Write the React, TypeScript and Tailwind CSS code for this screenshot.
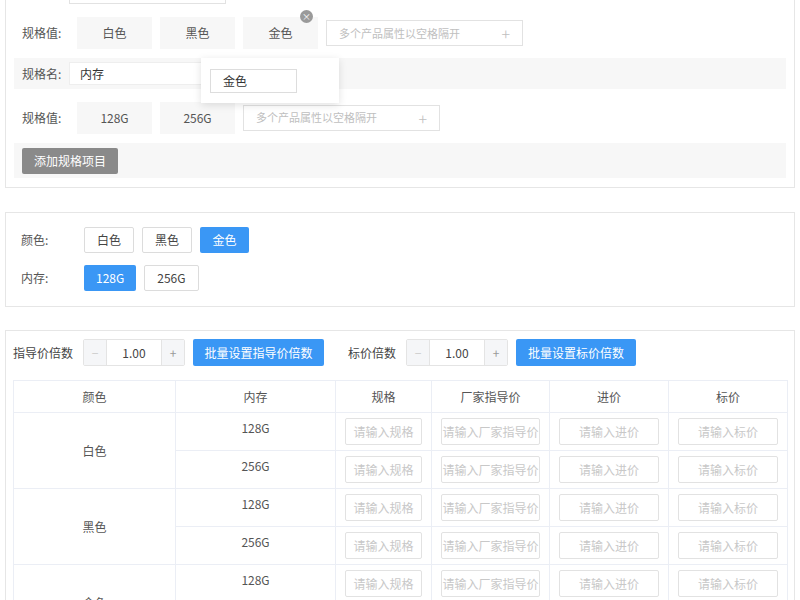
import React from "react";

const F = { fontFamily: '"Noto Sans CJK SC", "Liberation Sans", sans-serif' };

function Chip({ t, w = "w-[75px]" }: { t: string; w?: string }) {
  return <div className={`${w} h-[32px] bg-[#f7f7f7] flex items-center justify-center text-[12px] text-[#555]`}>{t}</div>;
}
function AddInput({ w }: { w: string }) {
  return (
    <div className={`${w} h-[26px] border border-[#e2e2e2] bg-white flex items-center justify-between px-3 text-[11px] text-[#c0c0c0] whitespace-nowrap overflow-hidden`}>
      <span>多个产品属性以空格隔开</span><span className="text-[16px] font-light">+</span>
    </div>
  );
}
function Opt({ t, on }: { t: string; on?: boolean }) {
  return (
    <div className={`h-[26px] px-3 min-w-[49px] flex items-center justify-center text-[12px] rounded-[2px] ${on ? "bg-[#3a97f5] text-white" : "border border-[#dcdcdc] text-[#444] bg-white"}`}>{t}</div>
  );
}
function Stepper() {
  return (
    <div className="flex h-[27px] border border-[#e4e4e4] rounded-[2px] w-[102px] text-[12px]">
      <div className="w-[23px] bg-[#f5f6f8] flex items-center justify-center text-[#ccc] border-r border-[#e4e4e4]">−</div>
      <div className="flex-1 flex items-center justify-center text-[#444]">1.00</div>
      <div className="w-[23px] bg-[#f5f6f8] flex items-center justify-center text-[#999] border-l border-[#e4e4e4]">+</div>
    </div>
  );
}
function Cell({ t }: { t: string }) {
  return (
    <td className="border border-[#ebeef5] px-[9px] py-[5px]">
      <div className="h-[27px] border border-[#e2e2e2] rounded-[2px] flex items-center justify-center text-[12px] text-[#c8c8c8] overflow-hidden whitespace-nowrap">{t}</div>
    </td>
  );
}

export default function App() {
  const colors = ["白色", "黑色", "金色"];
  return (
    <div style={F} className="w-[800px] h-[600px] overflow-hidden bg-white relative">
      <div className="mx-[5px] mt-[-8px] border border-[#e6e6e6] px-[8px] pb-[9px] relative">
        <div className="h-[11px] flex items-end pl-[55px]"><div className="w-[157px] h-[14px] border border-[#e2e2e2] bg-white" /></div>
        <div className="flex items-center gap-[8px] pl-[8px] h-[32px] mt-[13px]">
          <span className="w-[47px] text-[12px] text-[#555]">规格值:</span>
          <Chip t="白色" /><Chip t="黑色" /><Chip t="金色" />
          <AddInput w="w-[197px]" />
        </div>
        <div className="flex items-center bg-[#f7f7f7] h-[31px] mt-[9px] pl-[8px]">
          <span className="w-[47px] text-[12px] text-[#555]">规格名:</span>
          <div className="w-[135px] h-[23px] bg-white border border-[#eee] flex items-center pl-[10px] text-[12px] text-[#333]">内存</div>
        </div>
        <div className="flex items-center gap-[8px] pl-[8px] h-[33px] mt-[12px]">
          <span className="w-[47px] text-[12px] text-[#555]">规格值:</span>
          <Chip t="128G" /><Chip t="256G" />
          <AddInput w="w-[197px]" />
        </div>
        <div className="flex items-center bg-[#f7f7f7] h-[35px] mt-[9px] pl-[8px]">
          <div className="h-[26px] px-[12px] bg-[#8a8a8a] rounded-[2px] text-white text-[12px] flex items-center">添加规格项目</div>
        </div>
        <div className="absolute left-[195px] top-[65px] w-[138px] h-[45px] bg-white shadow-[0_2px_8px_rgba(0,0,0,0.12)] flex items-center pl-[9px]">
          <div className="w-[87px] h-[24px] border border-[#ddd] text-[12px] text-[#333] flex items-center pl-[12px]">金色</div>
        </div>
        <div className="absolute left-[294px] top-[17px] w-[13px] h-[13px] rounded-full bg-[#9a9a9a] text-white text-[9px] leading-[13px] text-center">×</div>
      </div>

      <div className="mx-[5px] mt-[24px] h-[95px] border border-[#e6e6e6] px-[15px] pt-[14px] flex flex-col gap-[12px]">
        <div className="flex items-center gap-[8px]">
          <span className="w-[55px] text-[12px] text-[#555]">颜色:</span>
          {colors.map((c) => <Opt key={c} t={c} on={c === "金色"} />)}
        </div>
        <div className="flex items-center gap-[8px]">
          <span className="w-[55px] text-[12px] text-[#555]">内存:</span>
          <Opt t="128G" on /><Opt t="256G" />
        </div>
      </div>

      <div className="mx-[5px] mt-[23px] border border-[#e6e6e6] px-[7px] pt-[8px]">
        <div className="flex items-center h-[27px] text-[12px] text-[#444]">
          <span className="w-[70px]">指导价倍数</span>
          <Stepper />
          <div className="ml-[8px] h-[27px] w-[131px] bg-[#3a97f5] text-white rounded-[2px] flex items-center justify-center">批量设置指导价倍数</div>
          <span className="ml-[24px] w-[58px]">标价倍数</span>
          <Stepper />
          <div className="ml-[8px] h-[27px] w-[120px] bg-[#3a97f5] text-white rounded-[2px] flex items-center justify-center">批量设置标价倍数</div>
        </div>
        <table className="mt-[14px] w-[774px] border-collapse table-fixed text-[12px] text-[#555]">
          <colgroup>
            <col className="w-[162px]" /><col className="w-[160px]" /><col className="w-[96px]" /><col className="w-[118px]" /><col className="w-[119px]" /><col className="w-[119px]" />
          </colgroup>
          <thead>
            <tr className="h-[32px]">
              {["颜色", "内存", "规格", "厂家指导价", "进价", "标价"].map((h) => (
                <th key={h} className="border border-[#ebeef5] font-normal">{h}</th>
              ))}
            </tr>
          </thead>
          <tbody>
            {colors.map((c) => ["128G", "256G"].map((m, i) => (
              <tr key={c + m} className="h-[37px]">
                {i === 0 && <td rowSpan={2} className="border border-[#ebeef5] text-center">{c}</td>}
                <td className="border border-[#ebeef5] text-center align-top pt-[6px]">{m}</td>
                <Cell t="请输入规格" /><Cell t="请输入厂家指导价" /><Cell t="请输入进价" /><Cell t="请输入标价" />
              </tr>
            )))}
          </tbody>
        </table>
      </div>
    </div>
  );
}
